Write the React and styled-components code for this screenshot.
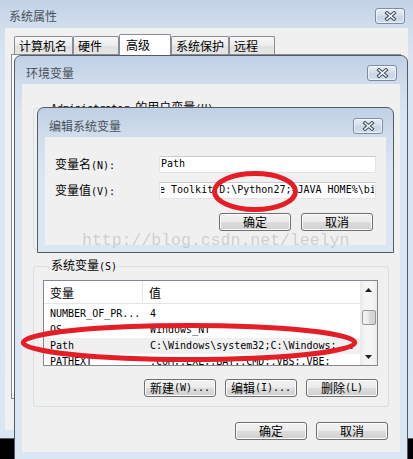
import React from "react";
import styled, { createGlobalStyle } from "styled-components";

const GlobalStyle = createGlobalStyle`
  html, body {
    margin: 0;
    padding: 0;
    background: #000;
  }
  body {
    font-family: "Noto Sans CJK SC", "Liberation Sans", sans-serif;
    font-size: 12px;
    color: #000;
  }
`;

const Desktop = styled.div`
  position: relative;
  width: 413px;
  height: 459px;
  overflow: hidden;
  background: #000;
`;

/* a window on the desktop: placed by its coordinates */
const Win = styled.div`
  position: absolute;
  left: ${(p) => p.$x}px;
  top: ${(p) => p.$y}px;
  width: ${(p) => p.$w}px;
  height: ${(p) => p.$h}px;
  box-sizing: border-box;
  border: 1px solid #565a61;
  border-radius: 7px 7px 0 0;
  padding: 0 ${(p) => p.$pad}px ${(p) => p.$pad}px;
  display: flex;
  flex-direction: column;
  background: linear-gradient(to bottom, #c0d0e5 0, #cfdcec 26px, #d9e5f3 60px, #dae6f4 100%);
`;

const TitleBar = styled.div`
  height: ${(p) => p.$h}px;
  box-sizing: border-box;
  padding: ${(p) => p.$top}px 3px 0 4px;
  display: flex;
  align-items: center;
  flex-shrink: 0;
`;

const Title = styled.span`
  font-size: 12px;
  line-height: 16px;
  color: #4a505a;
`;

const CloseBtn = styled.div`
  margin-left: auto;
  width: 30px;
  height: 16px;
  box-sizing: border-box;
  border: 1px solid #7d8ca1;
  border-radius: 3px;
  background: linear-gradient(to bottom, #e6edf5, #d3deea 50%, #c8d5e5 51%, #d3dfec);
  box-shadow: inset 0 0 0 1px rgba(255, 255, 255, 0.55);
  display: flex;
  align-items: center;
  justify-content: center;
`;

const Lat = styled.span`
  font-family: "DejaVu Sans Mono", monospace;
  font-size: 10px;
`;

/* ---- outer window: 系统属性 ---- */
const OuterBody = styled.div`
  flex: 1;
  background: #f0f0f0;
  padding: 6px 7px 0 6px;
  display: flex;
  flex-direction: column;
`;

const TabRow = styled.div`
  display: flex;
  align-items: flex-end;
  height: 20px;
  padding-left: 3px;
  position: relative;
  z-index: 1;
`;

const Tab = styled.div`
  width: ${(p) => p.$w}px;
  height: ${(p) => (p.$active ? 21 : 18)}px;
  margin-bottom: ${(p) => (p.$active ? -1 : 0)}px;
  box-sizing: border-box;
  border: 1px solid #898c95;
  border-bottom: none;
  border-radius: 2px 2px 0 0;
  padding-left: ${(p) => (p.$active ? 6 : 4)}px;
  padding-top: ${(p) => (p.$active ? 1 : 0)}px;
  line-height: 17px;
  font-size: 12px;
  background: ${(p) =>
    p.$active ? "#fff" : "linear-gradient(to bottom, #f7f7f7, #ececec 50%, #e0e0e0 51%, #e6e6e6)"};
`;

const TabPanel = styled.div`
  height: 343px;
  border: 1px solid #898c95;
  background: #fbfbfb;
`;

/* ---- env window: 环境变量 ---- */
const EnvBody = styled.div`
  flex: 1;
  background: #f0f0f0;
  padding: 16px 11px 0 11px;
  display: flex;
  flex-direction: column;
`;

const Group = styled.fieldset`
  margin: ${(p) => p.$mt}px 0 0;
  padding: 6px 10px 11px 9px;
  height: ${(p) => p.$h}px;
  box-sizing: border-box;
  min-width: 0;
  border: 1px solid #d5dfe5;
  border-radius: 3px;
  display: flex;
  flex-direction: column;
`;

const Legend = styled.legend`
  padding: 0 2px;
  margin-left: 6px;
  font-size: 12px;
  line-height: 14px;
`;

const ListBox = styled.div`
  height: 86px;
  box-sizing: border-box;
  border: 1px solid #828790;
  background: #fff;
  display: flex;
  overflow: hidden;
  flex-shrink: 0;
`;

const ListMain = styled.div`
  flex: 1;
  min-width: 0;
  display: flex;
  flex-direction: column;
`;

const HeaderRow = styled.div`
  display: grid;
  grid-template-columns: 99px 1fr;
  height: 23px;
  box-sizing: border-box;
  border-bottom: 1px solid #e5e5e5;
  margin-bottom: 2px;
  flex-shrink: 0;
`;

const HeaderCell = styled.div`
  padding: 2px 0 0 ${(p) => p.$pl}px;
  line-height: 20px;
  font-size: 12px;
  border-right: ${(p) => (p.$divider ? "1px solid #e5e5e5" : "none")};
`;

const Row = styled.div`
  display: grid;
  grid-template-columns: 99px 1fr;
  height: 16px;
  line-height: 16px;
  flex-shrink: 0;
  white-space: nowrap;
  font-family: "DejaVu Sans Mono", monospace;
  font-size: 10px;
  background: ${(p) => (p.$hl ? "#f0f0f0" : "transparent")};
`;

const Cell = styled.div`
  padding-left: ${(p) => p.$pl}px;
  overflow: hidden;
`;

const ScrollBar = styled.div`
  width: 17px;
  display: flex;
  flex-direction: column;
  background: linear-gradient(to right, #e9e9e9, #f5f5f5 30%, #f5f5f5 70%, #ebebeb);
  flex-shrink: 0;
`;

const ScrollArrow = styled.div`
  height: 17px;
  display: flex;
  align-items: center;
  justify-content: center;
  flex-shrink: 0;
`;

const ScrollTrack = styled.div`
  flex: 1;
`;

const Thumb = styled.div`
  margin: 12px 1px 0 2px;
  height: 15px;
  box-sizing: border-box;
  border: 1px solid #979797;
  border-radius: 2px;
  background: linear-gradient(to right, #f4f4f4, #e8e8e8 50%, #d9d9d9 51%, #d2d2d2);
`;

const ButtonRow = styled.div`
  display: flex;
  justify-content: flex-end;
  gap: ${(p) => p.$gap}px;
  margin-top: ${(p) => p.$mt}px;
  padding-right: ${(p) => p.$pr}px;
  flex-shrink: 0;
`;

const Button = styled.div`
  width: 72px;
  height: 18px;
  box-sizing: border-box;
  border: 1px solid #707070;
  border-radius: 3px;
  background: linear-gradient(to bottom, #f2f2f2 0%, #ebebeb 50%, #dddddd 51%, #cfcfcf 100%);
  box-shadow: inset 0 0 0 1px #fbfbfb;
  display: flex;
  align-items: center;
  justify-content: center;
  font-size: 12px;
  line-height: 16px;
`;

/* ---- edit window: 编辑系统变量 ---- */
const EditBody = styled.div`
  flex: 1;
  background: #f0f0f0;
  padding: 19px 10px 0 10px;
  display: flex;
  flex-direction: column;
`;

const FieldRow = styled.div`
  display: flex;
  align-items: center;
  height: 17px;
  margin-top: ${(p) => p.$mt}px;
`;

const FieldLabel = styled.label`
  width: 104px;
  flex-shrink: 0;
  font-size: 12px;
  line-height: 16px;
`;

const TextField = styled.input`
  flex: 1;
  min-width: 0;
  height: 17px;
  box-sizing: border-box;
  margin: 0;
  padding: 0 1px 2px;
  text-indent: ${(p) => p.$shift || 0}px;
  border: 1px solid #e1e5ea;
  border-top-color: #c9ccd2;
  background: #fff;
  font-family: "DejaVu Sans Mono", monospace;
  font-size: 10px;
  color: #000;
  outline: none;
`;

/* ---- annotations laid over the screenshot ---- */
const Watermark = styled.div`
  position: absolute;
  left: 82px;
  top: 232px;
  font-family: "Liberation Mono", monospace;
  font-size: 16.5px;
  line-height: 17px;
  color: rgba(150, 150, 150, 0.38);
  white-space: nowrap;
  pointer-events: none;
`;

const Marks = styled.svg`
  position: absolute;
  left: 0;
  top: 0;
  pointer-events: none;
`;

const CloseGlyph = () => (
  <svg width="13" height="10" viewBox="0 0 13 10">
    <path d="M3 2 L10 8 M10 2 L3 8" stroke="#3e4958" strokeWidth="3.6" strokeLinecap="square" />
    <path d="M3 2 L10 8 M10 2 L3 8" stroke="#f5f7fa" strokeWidth="1.6" strokeLinecap="square" />
  </svg>
);

const Arrow = ({ up }) => (
  <svg width="7" height="4" viewBox="0 0 7 4">
    <polygon points={up ? "3.5,0 7,4 0,4" : "0,0 7,0 3.5,4"} fill="#1f1f1f" />
  </svg>
);

const tabs = [
  { label: "计算机名", w: 59 },
  { label: "硬件", w: 46 },
  { label: "高级", w: 52, active: true },
  { label: "系统保护", w: 58 },
  { label: "远程", w: 46 },
];

const sysVars = [
  { name: "NUMBER_OF_PR...", value: "4" },
  { name: "OS", value: "Windows_NT" },
  { name: "Path", value: "C:\\Windows\\system32;C:\\Windows;...", hl: true },
  { name: "PATHEXT", value: ".COM;.EXE;.BAT;.CMD;.VBS;.VBE;" },
];

export default function App() {
  return (
    <>
      <GlobalStyle />
      <Desktop>
        <Win $x={-4} $y={-4} $w={421} $h={443} $pad={8}>
          <TitleBar $h={31} $top={7}>
            <Title>系统属性</Title>
            <CloseBtn>
              <CloseGlyph />
            </CloseBtn>
          </TitleBar>
          <OuterBody>
            <TabRow>
              {tabs.map((t) => (
                <Tab key={t.label} $w={t.w} $active={t.active}>
                  {t.label}
                </Tab>
              ))}
            </TabRow>
            <TabPanel />
          </OuterBody>
        </Win>

        <Win $x={14} $y={55} $w={394} $h={405} $pad={7}>
          <TitleBar $h={28} $top={5}>
            <Title>环境变量</Title>
            <CloseBtn>
              <CloseGlyph />
            </CloseBtn>
          </TitleBar>
          <EnvBody>
            <Group $mt={0} $h={150}>
              <Legend>
                <Lat>Administrator </Lat>的用户变量<Lat>(U)</Lat>
              </Legend>
            </Group>
            <Group $mt={8} $h={149}>
              <Legend>
                系统变量<Lat>(S)</Lat>
              </Legend>
              <ListBox>
                <ListMain>
                  <HeaderRow>
                    <HeaderCell $pl={6} $divider>变量</HeaderCell>
                    <HeaderCell $pl={6}>值</HeaderCell>
                  </HeaderRow>
                  {sysVars.map((v) => (
                    <Row key={v.name} $hl={v.hl}>
                      <Cell $pl={6}>{v.name}</Cell>
                      <Cell $pl={7}>{v.value}</Cell>
                    </Row>
                  ))}
                </ListMain>
                <ScrollBar>
                  <ScrollArrow>
                    <Arrow up />
                  </ScrollArrow>
                  <ScrollTrack>
                    <Thumb />
                  </ScrollTrack>
                  <ScrollArrow>
                    <Arrow />
                  </ScrollArrow>
                </ScrollBar>
              </ListBox>
              <ButtonRow $gap={9} $mt={13} $pr={0}>
                <Button>
                  新建<Lat>(W)...</Lat>
                </Button>
                <Button>
                  编辑<Lat>(I)...</Lat>
                </Button>
                <Button>
                  删除<Lat>(L)</Lat>
                </Button>
              </ButtonRow>
            </Group>
            <ButtonRow $gap={9} $mt={15} $pr={1}>
              <Button>确定</Button>
              <Button>取消</Button>
            </ButtonRow>
          </EnvBody>
        </Win>

        <Win $x={37} $y={107} $w={357} $h={146} $pad={7}>
          <TitleBar $h={29} $top={6}>
            <Title>编辑系统变量</Title>
            <CloseBtn>
              <CloseGlyph />
            </CloseBtn>
          </TitleBar>
          <EditBody>
            <FieldRow $mt={0}>
              <FieldLabel>
                变量名<Lat>(N):</Lat>
              </FieldLabel>
              <TextField readOnly value="Path" />
            </FieldRow>
            <FieldRow $mt={9}>
              <FieldLabel>
                变量值<Lat>(V):</Lat>
              </FieldLabel>
              <TextField readOnly $shift={-2} value={"e Toolkit;D:\\Python27;%JAVA_HOME%\\bin"} />
            </FieldRow>
            <ButtonRow $gap={10} $mt={14} $pr={3}>
              <Button>确定</Button>
              <Button>取消</Button>
            </ButtonRow>
          </EditBody>
        </Win>

        <Watermark>http://blog.csdn.net/leelyn</Watermark>

        <Marks width="413" height="459" viewBox="0 0 413 459">
          <ellipse cx="255" cy="191.5" rx="40.5" ry="18" fill="none" stroke="#e41e26" strokeWidth="5" />
          <ellipse cx="189" cy="342.5" rx="165.8" ry="17" fill="none" stroke="#e41e26" strokeWidth="5" />
        </Marks>
      </Desktop>
    </>
  );
}
